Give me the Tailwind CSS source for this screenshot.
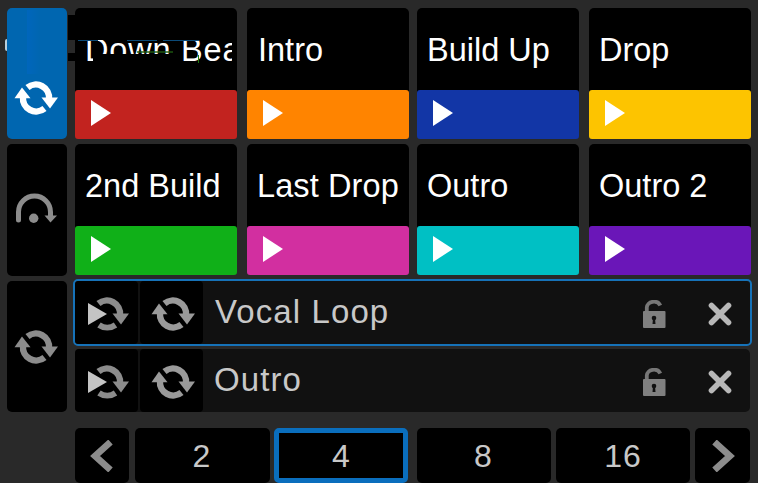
<!DOCTYPE html>
<html lang="en">
<head>
    <meta charset="UTF-8">
    <meta name="viewport" content="width=device-width, initial-scale=1.0">
    <title>Hot Cues</title>
    <script src="https://cdn.jsdelivr.net/npm/@tailwindcss/browser@4"></script>
</head>
<body class="h-[483px] w-[758px] overflow-hidden bg-[#292929] font-['Liberation_Sans',Arial,sans-serif] text-white">

    <!-- Shared icons -->
    <svg class="hidden">
        <symbol id="loop" viewBox="0 0 44 36">
            <path d="M13.5 7.5A13.2 13.2 0 0 1 35 19" fill="none" stroke="currentColor" stroke-width="6.4"/>
            <path d="M27.5 17.5H44L36 28.5Z" fill="currentColor"/>
            <path d="M30.5 28.5A13.2 13.2 0 0 1 9 17" fill="none" stroke="currentColor" stroke-width="6.4"/>
            <path d="M0.5 18.3H16.5L8 7.5Z" fill="currentColor"/>
        </symbol>
        <symbol id="play-loop" viewBox="0 0 44 36">
            <path d="M13.5 7.5A13.2 13.2 0 0 1 35 19" fill="none" stroke="#8c8c8c" stroke-width="6.4"/>
            <path d="M27.5 17.5H44L36 28.5Z" fill="#8c8c8c"/>
            <path d="M30.5 29A14.5 14.5 0 0 1 14 29" fill="none" stroke="#8c8c8c" stroke-width="6"/>
            <path d="M3 7L22 18L3 29Z" fill="#c4c4c4" stroke="#000" stroke-width="1" paint-order="stroke"/>
        </symbol>
        <symbol id="play" viewBox="0 0 20 26">
            <path d="M0 0L20 13L0 26Z" fill="#fff"/>
        </symbol>
        <symbol id="unlock" viewBox="0 0 24 28">
            <path d="M4.8 11V7.5A7 6 0 0 1 18.3 5.5" fill="none" stroke="#777" stroke-width="3.8"/>
            <rect x="1" y="11" width="22.5" height="17" rx="1" fill="#808080"/>
            <circle cx="12" cy="18" r="2.3" fill="#111"/>
            <path d="M11 18H13L13.5 24H10.5Z" fill="#111"/>
        </symbol>
        <symbol id="close" viewBox="0 0 24 24">
            <path d="M3.5 3.5L20.5 20.5M20.5 3.5L3.5 20.5" stroke="#b8b8b8" stroke-width="5.6" stroke-linecap="round"/>
        </symbol>
    </svg>

    <div class="flex gap-[8px] pt-[8px] pl-[7px]">
        <!-- Mode buttons -->
        <div class="flex w-[60px] shrink-0 flex-col gap-[5px]">
            <button class="relative flex h-[131px] justify-center rounded-[5px] bg-[#0066b0] pt-[72px] pr-[2px]">
                <span class="absolute top-[2px] left-[20px] h-[64px] w-[13px] bg-linear-to-r from-[#0066bc] to-[#0066b0]"></span>
                <svg class="h-9 w-11"><use href="#loop"/></svg>
                <span class="absolute top-[31px] -left-[2px] h-3 w-[2px] rounded-l-full bg-[#b8cfdc]"></span>
            </button>
            <button class="flex h-[132px] justify-center rounded-[5px] bg-black pt-[49px] pr-[2px] text-[#8c8c8c]">
                <svg class="h-8 w-11" viewBox="0 0 44 32">
                    <path d="M4.5 27V19A16 16 0 0 1 36.5 19V24" fill="none" stroke="currentColor" stroke-width="5" stroke-linecap="round"/>
                    <circle cx="19.7" cy="25.3" r="4.7" fill="currentColor"/>
                    <path d="M30.5 22.5H43L36.5 29.5Z" fill="currentColor"/>
                </svg>
            </button>
            <button class="flex h-[131px] justify-center rounded-[5px] bg-black pt-[48px] pr-[2px] text-[#8c8c8c]">
                <svg class="h-9 w-11"><use href="#loop"/></svg>
            </button>
        </div>

        <div class="w-[677px]">
            <!-- Hot cue pads -->
            <div class="grid grid-cols-[172px_170px_172px_162px] gap-y-[5px] text-[32.5px] leading-[36px] whitespace-nowrap">
                <div class="relative h-[131px] w-[162px] rounded-[5px] bg-black">
                    <div class="h-[82px] w-[157px] overflow-hidden pt-[24px] pl-[10px] tracking-[0.8px]">Down Beat</div>
                    <div class="absolute top-[7px] -left-[7px] h-[25px] w-[164px] bg-black"></div>
                    <div class="absolute top-[45px] -left-[7px] h-[8px] w-[12px] bg-black"></div>
                    <div class="absolute top-[46px] left-[18px] h-[8px] w-[80px] bg-black"></div>
                    <!-- colour fringes along the title -->
                    <div class="absolute top-[32px] left-[3px] h-px w-[20px] bg-[#0b4a78]"></div>
                    <div class="absolute top-[32px] left-[52px] h-px w-[30px] bg-[#0b4a78]"></div>
                    <div class="absolute top-[32px] left-[88px] h-px w-[36px] bg-[#0b4a78]"></div>
                    <div class="absolute top-[43px] left-[62px] h-[2px] w-[36px] bg-[#1c5a10]/70"></div>
                    <div class="absolute top-[47px] left-[123px] h-[8px] w-px bg-[#1c7a10]"></div>
                    <div class="h-[49px] rounded-[3px] bg-[#c2231f] pt-[10px] pl-[16px]"><svg class="h-[26px] w-5"><use href="#play"/></svg></div>
                </div>
                <div class="h-[131px] w-[162px] rounded-[5px] bg-black">
                    <div class="h-[82px] pt-[24px] pl-[11px]">Intro</div>
                    <div class="h-[49px] rounded-[3px] bg-[#ff8400] pt-[10px] pl-[16px]"><svg class="h-[26px] w-5"><use href="#play"/></svg></div>
                </div>
                <div class="h-[131px] w-[162px] rounded-[5px] bg-black">
                    <div class="h-[82px] pt-[24px] pl-[10px]">Build Up</div>
                    <div class="h-[49px] rounded-[3px] bg-[#1236a6] pt-[10px] pl-[16px]"><svg class="h-[26px] w-5"><use href="#play"/></svg></div>
                </div>
                <div class="h-[131px] w-[162px] rounded-[5px] bg-black">
                    <div class="h-[82px] pt-[24px] pl-[10px]">Drop</div>
                    <div class="h-[49px] rounded-[3px] bg-[#fdc400] pt-[10px] pl-[16px]"><svg class="h-[26px] w-5"><use href="#play"/></svg></div>
                </div>
                <div class="h-[131px] w-[162px] rounded-[5px] bg-black">
                    <div class="h-[82px] pt-[24px] pl-[10px]">2nd Build</div>
                    <div class="h-[49px] rounded-[3px] bg-[#10b018] pt-[10px] pl-[16px]"><svg class="h-[26px] w-5"><use href="#play"/></svg></div>
                </div>
                <div class="h-[131px] w-[162px] rounded-[5px] bg-black">
                    <div class="h-[82px] pt-[24px] pl-[10px] tracking-[0.1px]">Last Drop</div>
                    <div class="h-[49px] rounded-[3px] bg-[#d22fa0] pt-[10px] pl-[16px]"><svg class="h-[26px] w-5"><use href="#play"/></svg></div>
                </div>
                <div class="h-[131px] w-[162px] rounded-[5px] bg-black">
                    <div class="h-[82px] pt-[24px] pl-[10px]">Outro</div>
                    <div class="h-[49px] rounded-[3px] bg-[#00c0c4] pt-[10px] pl-[16px]"><svg class="h-[26px] w-5"><use href="#play"/></svg></div>
                </div>
                <div class="h-[131px] w-[162px] rounded-[5px] bg-black">
                    <div class="h-[82px] pt-[24px] pl-[10px]">Outro 2</div>
                    <div class="h-[49px] rounded-[3px] bg-[#6a16b8] pt-[10px] pl-[16px]"><svg class="h-[26px] w-5"><use href="#play"/></svg></div>
                </div>
            </div>

            <!-- Saved loops -->
            <div class="mt-[4px] -ml-[2px] flex h-[67px] w-[679px] gap-[2px] rounded-[5px] border-2 border-[#1672b8] bg-[#111] text-[#c8c8c8]">
                <div class="w-[63px] rounded-[4px] bg-black pt-[15px] pl-[10px]"><svg class="h-9 w-11"><use href="#play-loop"/></svg></div>
                <div class="w-[63px] rounded-[4px] bg-black pt-[15px] pl-[11px] text-[#9a9a9a]"><svg class="h-9 w-11"><use href="#loop"/></svg></div>
                <div class="flex-1 pt-[13px] pl-[10px] text-[33px] leading-[36px] tracking-[1.1px]">Vocal Loop</div>
                <svg class="mt-[19px] h-7 w-6"><use href="#unlock"/></svg>
                <svg class="mt-[21px] mr-[18px] ml-[40px] h-6 w-6"><use href="#close"/></svg>
            </div>
            <div class="mt-[3px] flex h-[63px] w-[675px] gap-[2px] rounded-[5px] bg-[#111] text-[#c8c8c8]">
                <div class="w-[63px] rounded-[4px] bg-black pt-[15px] pl-[10px]"><svg class="h-9 w-11"><use href="#play-loop"/></svg></div>
                <div class="w-[63px] rounded-[4px] bg-black pt-[15px] pl-[11px] text-[#9a9a9a]"><svg class="h-9 w-11"><use href="#loop"/></svg></div>
                <div class="flex-1 pt-[13px] pl-[9px] text-[33px] leading-[36px] tracking-[1.1px]">Outro</div>
                <svg class="mt-[19px] h-7 w-6"><use href="#unlock"/></svg>
                <svg class="mt-[21px] mr-[18px] ml-[40px] h-6 w-6"><use href="#close"/></svg>
            </div>

            <!-- Loop length -->
            <div class="mt-[16px] flex h-[55px] text-[32px] leading-[57px] text-[#c8c8c8]">
                <button class="flex w-[54px] items-center justify-center rounded-[5px] bg-black">
                    <svg class="h-8 w-6" viewBox="0 0 24 32"><path d="M20.5 2L5 16L20.5 30" fill="none" stroke="#8c8c8c" stroke-width="6.6"/></svg>
                </button>
                <button class="ml-[6px] w-[135px] rounded-[5px] bg-black pr-[2px]">2</button>
                <button class="ml-[4px] w-[134px] rounded-[5px] border-[5px] border-[#0a6ebd] bg-black leading-[47px]">4</button>
                <button class="ml-[9px] w-[134px] rounded-[5px] bg-black pr-[2px]">8</button>
                <button class="ml-[5px] w-[134px] rounded-[5px] bg-black tracking-[1px]">16</button>
                <button class="ml-[5px] flex w-[55px] items-center justify-center rounded-[5px] bg-black">
                    <svg class="h-8 w-6" viewBox="0 0 24 32"><path d="M3.5 2L19 16L3.5 30" fill="none" stroke="#8c8c8c" stroke-width="6.6"/></svg>
                </button>
            </div>
        </div>
    </div>
</body>
</html>
